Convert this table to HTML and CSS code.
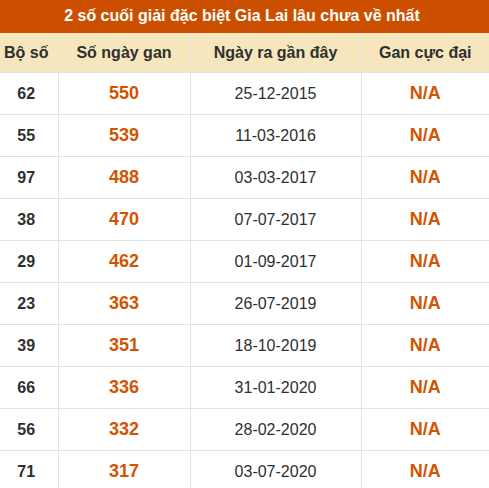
FILE: index.html
```html
<!DOCTYPE html>
<html lang="vi">
<head>
<meta charset="utf-8">
<link rel="stylesheet" href="styles.css">
</head>
<body>
<div class="wrap">
  <div class="title">2 số cuối giải đặc biệt Gia Lai lâu chưa về nhất</div>
  <table class="gan">
    <colgroup>
      <col class="c1"><col class="c2"><col class="c3"><col class="c4">
    </colgroup>
    <thead>
      <tr><th>Bộ số</th><th>Số ngày gan</th><th>Ngày ra gần đây</th><th>Gan cực đại</th></tr>
    </thead>
    <tbody>
      <tr><td class="num">62</td><td class="hi">550</td><td class="date">25-12-2015</td><td class="hi">N/A</td></tr>
      <tr><td class="num">55</td><td class="hi">539</td><td class="date">11-03-2016</td><td class="hi">N/A</td></tr>
      <tr><td class="num">97</td><td class="hi">488</td><td class="date">03-03-2017</td><td class="hi">N/A</td></tr>
      <tr><td class="num">38</td><td class="hi">470</td><td class="date">07-07-2017</td><td class="hi">N/A</td></tr>
      <tr><td class="num">29</td><td class="hi">462</td><td class="date">01-09-2017</td><td class="hi">N/A</td></tr>
      <tr><td class="num">23</td><td class="hi">363</td><td class="date">26-07-2019</td><td class="hi">N/A</td></tr>
      <tr><td class="num">39</td><td class="hi">351</td><td class="date">18-10-2019</td><td class="hi">N/A</td></tr>
      <tr><td class="num">66</td><td class="hi">336</td><td class="date">31-01-2020</td><td class="hi">N/A</td></tr>
      <tr><td class="num">56</td><td class="hi">332</td><td class="date">28-02-2020</td><td class="hi">N/A</td></tr>
      <tr><td class="num">71</td><td class="hi">317</td><td class="date">03-07-2020</td><td class="hi">N/A</td></tr>
    </tbody>
  </table>
</div>
</body>
</html>
```
FILE: styles.css
```css
html, body {
  margin: 0;
  padding: 0;
  background: #ffffff;
  overflow: hidden;
}
body {
  font-family: "Liberation Sans", Arial, sans-serif;
  color: #2f2f2f;
}
.wrap {
  width: 494px;
  margin-left: -5px;
}
.title {
  height: 33px;
  line-height: 31px;
  background: #cc4f00;
  color: #ffffff;
  font-weight: bold;
  font-size: 16px;
  text-align: center;
}
.gan {
  width: 494px;
  border-collapse: collapse;
  table-layout: fixed;
}
.c1 { width: 63px; }
.c2 { width: 132px; }
.c3 { width: 171px; }
.c4 { width: 128px; }
.gan th {
  height: 39px;
  padding: 0;
  background: #f6e6bd;
  font-size: 16px;
  font-weight: bold;
  color: #2f2f2f;
  border-left: 1px solid #e2e2e2;
  border-bottom: 1px solid #e2e2e2;
  text-align: center;
}
.gan td {
  height: 41px;
  padding: 0;
  text-align: center;
  border-left: 1px solid #e2e2e2;
  border-bottom: 1px solid #e2e2e2;
}
.gan tr > :first-child { border-left: none; }
.gan .num {
  font-weight: bold;
  font-size: 16px;
  color: #2f2f2f;
}
.gan .hi {
  font-weight: bold;
  font-size: 18px;
  color: #d35400;
}
.gan .date {
  font-size: 16px;
  color: #2f2f2f;
}
```
